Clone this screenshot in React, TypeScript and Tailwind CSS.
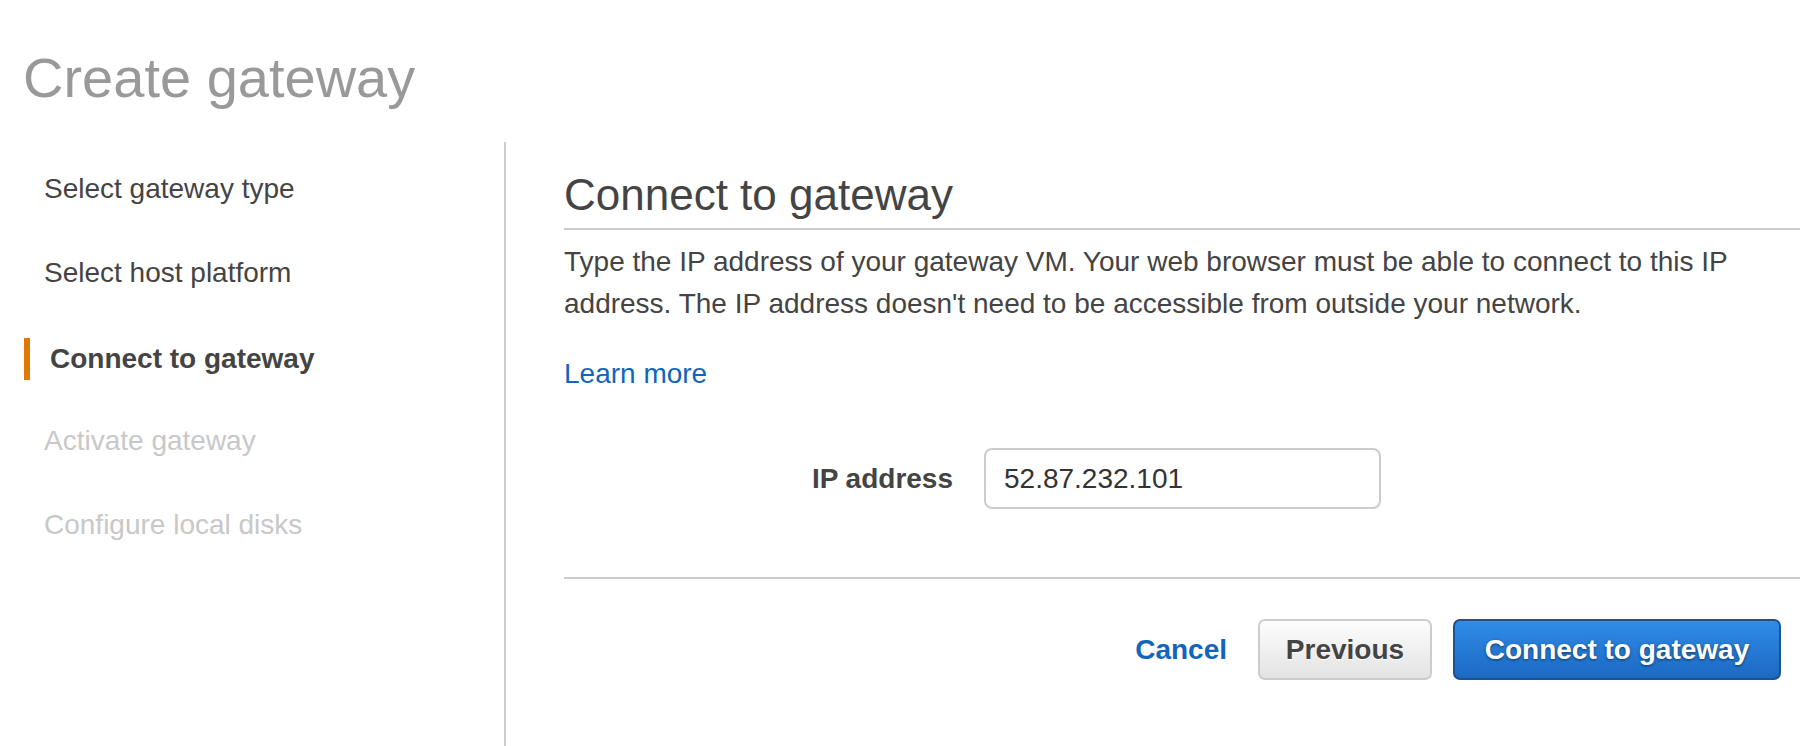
import React from 'react';

const steps = [
  { label: 'Select gateway type', state: 'done' },
  { label: 'Select host platform', state: 'done' },
  { label: 'Connect to gateway', state: 'active' },
  { label: 'Activate gateway', state: 'todo' },
  { label: 'Configure local disks', state: 'todo' },
];

export default function App() {
  return (
    <div className="min-h-screen bg-white font-['Liberation_Sans',Arial,sans-serif] text-[#444]">
      <h1 className="pl-[23px] pt-[44px] text-[56px] leading-[67px] font-normal text-[#999]">Create gateway</h1>

      <div className="mt-[31px] flex">
        {/* wizard steps */}
        <nav className="w-[506px] shrink-0 min-h-[604px] border-r-2 border-[#ccc] pl-[24px] pt-[5px]">
          {steps.map((s) => (
            <div key={s.label} className="h-[84px] flex items-center text-[28px]">
              {s.state === 'active' ? (
                <span className="mt-[4px] h-[42px] flex items-center border-l-[6px] border-[#e07800] pl-[20px] font-bold text-[#444]">
                  {s.label}
                </span>
              ) : (
                <span className={`pl-[20px] ${s.state === 'todo' ? 'text-[#c8c8c8]' : 'text-[#444]'}`}>{s.label}</span>
              )}
            </div>
          ))}
        </nav>

        <main className="flex-1 pl-[58px] pr-[18px] pt-[26px]">
          <h2 className="border-b-2 border-[#ccc] pb-[7px] text-[44px] leading-[53px] font-normal text-[#444]">
            Connect to gateway
          </h2>
          <p className="mt-[11px] text-[28px] leading-[42px]">
            Type the IP address of your gateway VM. Your web browser must be able to connect to this IP address. The IP
            address doesn't need to be accessible from outside your network.
          </p>
          <a href="#" className="mt-[28px] block w-fit text-[28px] leading-[42px] text-[#1166bb]">
            Learn more
          </a>

          <div className="mt-[53px] flex items-center">
            <label className="w-[389px] text-right text-[28px] font-bold text-[#444]">IP address</label>
            <input
              defaultValue="52.87.232.101"
              className="ml-[31px] h-[61px] w-[397px] rounded-[8px] border-2 border-[#ccc] bg-white pl-[18px] text-[28px] text-[#333] outline-none"
            />
          </div>

          <div className="mt-[68px] border-t-2 border-[#ccc]" />

          <div className="mt-[40px] flex items-center justify-end pr-[19px]">
            <a href="#" className="text-[28px] font-bold text-[#1166bb]">
              Cancel
            </a>
            <button className="ml-[31px] h-[61px] w-[174px] rounded-[7px] border-2 border-[#ccc] bg-linear-to-b from-[#fdfdfd] to-[#e3e3e3] text-[28px] font-bold text-[#444] [text-shadow:0_1px_0_#fff]">
              Previous
            </button>
            <button className="ml-[21px] h-[61px] w-[328px] rounded-[7px] border-2 border-[#1b528f] bg-linear-to-b from-[#2f8ce8] to-[#1c69c2] text-[28px] font-bold text-white [text-shadow:0_1px_3px_rgba(0,0,0,0.55)]">
              Connect to gateway
            </button>
          </div>
        </main>
      </div>
    </div>
  );
}
